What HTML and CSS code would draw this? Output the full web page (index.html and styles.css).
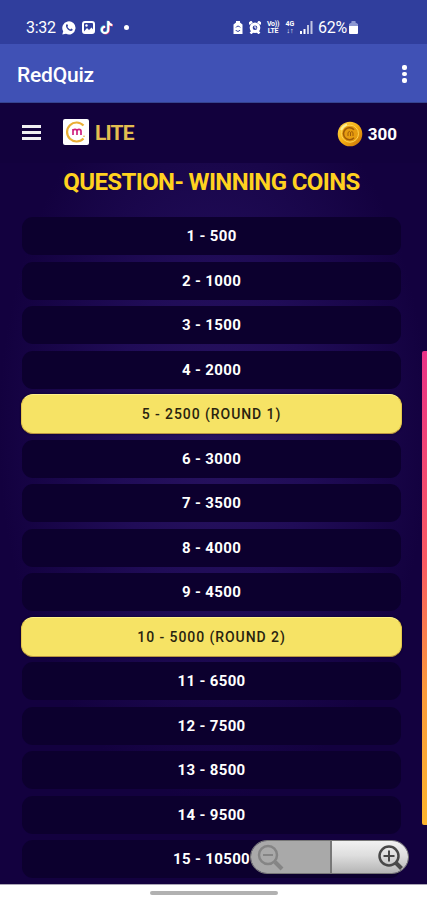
FILE: index.html
```html
<!DOCTYPE html>
<html lang="en">
<head>
<meta charset="UTF-8" />
<meta name="viewport" content="width=device-width, initial-scale=1" />
<title>RedQuiz</title>
<link rel="stylesheet" href="styles.css">
</head>
<body>

<div class="status-bar">
  <div class="status-left">
    <span class="clock">3:32</span>
    <svg class="whatsapp" width="14" height="14" viewBox="0 0 14 14"><path d="M.3 13.6 1.2 10.200A6.600 6.600 0 1 1 4 12.800z" fill="#fff"/><path d="M4.300 3.600c.8-.8 1.300-.3 1.800 1.200l-.6.900c.6 1.300 1.500 2.100 2.800 2.700l.9-.8c1.600.6 1.900 1.100 1.100 1.900C7.600 11.300 2.700 6.600 4.300 3.600z" fill="#303f9f"/></svg>
    <svg class="gallery" width="13" height="13" viewBox="0 0 13 13"><rect x="1" y="1" width="11" height="11" rx="2" fill="none" stroke="#fff" stroke-width="2"/><path d="M2 10.500 5 7l2 2 2.500-2.500 2 2.500v2.500H2z" fill="#fff"/><circle cx="4.500" cy="4.500" r="1.200" fill="#fff"/></svg>
    <svg class="tiktok" width="14" height="15" viewBox="0 0 14 15"><g fill="none" stroke-width="2"><path d="M8.900 1.500v8.700a3.300 3.300 0 1 1-3.300-3.300M8.900 2c.4 2.200 1.900 3.300 4.100 3.400" stroke="#ec4774"/><path d="M7.700.8v8.700a3.300 3.300 0 1 1-3.300-3.300" stroke="#5bdcea"/><path d="M8.300 1v8.900A3.200 3.200 0 1 1 5.100 6.700M8.300 1.500c.4 2.200 1.900 3.300 4 3.400" stroke="#fff"/></g></svg>
    <span class="more-dot"></span>
  </div>
  <div class="status-right">
    <svg class="saver" width="10" height="13" viewBox="0 0 10 13"><path d="M3 0h4v1.500l2.500 2V13h-9V3.500L3 1.500z" fill="#fff"/><path d="M3 6.500a2.300 2.300 0 0 1 4.200 0M7 9a2.300 2.300 0 0 1-4.200 0" fill="none" stroke="#303f9f"/></svg>
    <svg class="alarm" width="12" height="13" viewBox="0 0 12 13"><path d="m0 3 3-2.500M12 3 9 .5M1.500 12.500l2-2M10.500 12.500l-2-2" stroke="#fff" stroke-width="2.500"/><circle cx="6" cy="6.700" r="5.300" fill="#fff"/><circle cx="6" cy="6.700" r="2.300" fill="#303f9f"/><path d="M6 5v2h1.500" fill="none" stroke="#fff"/></svg>
    <span class="net volte">Vo))<br>LTE</span>
    <span class="net data">4G<br>↓↑</span>
    <svg class="signal" width="13" height="13" viewBox="0 0 13 13" fill="#fff"><path d="M0 10h2v3H0zM3.500 8h2v5h-2z"/><path opacity=".7" d="M7 4h2v9H7zM10.500 0h2v13h-2z"/></svg>
    <span class="percent">62%</span>
    <svg class="battery" width="9" height="13" viewBox="0 0 9 13"><path d="M2.500 0h4v1.500L9 3v3H0V3l2.500-1.500z" fill="#8d98d2"/><path d="M0 5h9v7a1 1 0 0 1-1 1H1a1 1 0 0 1-1-1z" fill="#fff"/></svg>
  </div>
</div>

<div class="app-bar">
  <h1 class="app-title">RedQuiz</h1>
  <div class="menu-dots"><span></span><span></span><span></span></div>
</div>

<main class="page">
  <header class="header">
    <div class="hamburger"><span></span><span></span><span></span></div>
    <div class="logo">
      <svg width="26" height="26" viewBox="0 0 26 26"><rect width="26" height="26" rx="2" fill="#fff"/><path d="M20.500 6.500A9.500 9.500 0 1 0 20.500 19.500" fill="none" stroke="#e9ae35" stroke-width="2.200"/><path d="M10 16v-6M10 12c0-2.300 4-2.300 4 0v4M14 12c0-2.300 4-2.300 4 0v4" fill="none" stroke="#cf217f" stroke-width="1.700"/><circle cx="21" cy="17.300" r=".8" fill="#e9ae35"/></svg>
      <span class="logo-text">LITE</span>
    </div>
    <div class="coins">
      <svg width="26" height="26" viewBox="0 0 26 26">
        <defs><linearGradient id="gold" x1="0" y1="0" x2="1" y2="1"><stop offset="0" stop-color="#ffd84a"/><stop offset=".5" stop-color="#f5ae12"/><stop offset="1" stop-color="#c46c06"/></linearGradient></defs>
        <circle cx="13" cy="13" r="12.300" fill="url(#gold)"/><circle cx="13" cy="12.700" r="8.500" fill="#e69c10" stroke="#ffd450"/><path d="M17 8.700a6 6 0 1 0 0 8" fill="none" stroke="#9e5b07" stroke-width="1.500"/><path d="M11 15v-3.500q1.500-2 2.500 0V15m0-3.500q1.500-2 2.500 0V15" fill="none" stroke="#9e5b07"/><path d="M4 9a10 10 0 0 1 6-5.500" fill="none" stroke="#fff091" stroke-width="2"/>
      </svg>
      <span>300</span>
    </div>
  </header>

  <h2 class="heading">QUESTION- WINNING COINS</h2>

  <ul class="prizes">
    <li class="prize">1 - 500</li>
    <li class="prize">2 - 1000</li>
    <li class="prize">3 - 1500</li>
    <li class="prize">4 - 2000</li>
    <li class="prize round">5 - 2500 (ROUND 1)</li>
    <li class="prize">6 - 3000</li>
    <li class="prize">7 - 3500</li>
    <li class="prize">8 - 4000</li>
    <li class="prize">9 - 4500</li>
    <li class="prize round">10 - 5000 (ROUND 2)</li>
    <li class="prize">11 - 6500</li>
    <li class="prize">12 - 7500</li>
    <li class="prize">13 - 8500</li>
    <li class="prize">14 - 9500</li>
    <li class="prize">15 - 10500</li>
  </ul>

  <div class="scrollbar"></div>

  <div class="zoom">
    <div class="zoom-out">
      <svg width="28" height="28" viewBox="0 0 28 28" fill="none" stroke="#858585"><circle cx="11" cy="11" r="9" stroke-width="2.500"/><path d="M6 11h10" stroke-width="2"/><path d="m18 18 7 7" stroke-width="4"/></svg>
    </div>
    <div class="zoom-in">
      <svg width="28" height="28" viewBox="0 0 28 28" fill="none" stroke="#484848"><circle cx="12" cy="13" r="9.500" stroke-width="2.500"/><path d="M6.500 13h11M12 7.500v11" stroke-width="2"/><path d="m19 20 5.500 5.500" stroke-width="4"/></svg>
    </div>
  </div>
</main>

<div class="nav-bar"><div class="nav-handle"></div></div>

</body>
</html>
```
FILE: styles.css
```css
* {
  box-sizing: border-box;
}
body {
  margin: 0;
  height: 900px;
  display: flex;
  flex-direction: column;
  overflow: hidden;
  font-family: Roboto, 'Open Sans', sans-serif;
  background: #fff;
  color: #fff;
}
svg {
  display: block;
  flex: none;
}

/* status bar */
.status-bar {
  height: 44px;
  padding: 11px 69px 0 26px;
  display: flex;
  justify-content: space-between;
  background: #303e9d;
}
.status-left, .status-right {
  display: flex;
  align-items: center;
  height: 33px;
}
.clock {
  width: 36px;
  font-size: 16px;
  letter-spacing: -0.3px;
}
.gallery {
  margin-left: 6px;
}
.tiktok {
  margin-left: 5px;
}
.more-dot {
  width: 5px;
  height: 5px;
  margin-left: 10px;
  border-radius: 50%;
  background: #fff;
}
.alarm {
  margin-left: 6px;
}
.net {
  font-size: 7px;
  line-height: 7px;
  font-weight: 700;
  text-align: center;
}
.volte {
  width: 14px;
  margin-left: 5px;
  letter-spacing: -0.3px;
}
.data {
  width: 10px;
  margin-left: 5px;
}
.signal {
  margin-left: 5px;
}
.percent {
  width: 30px;
  margin-left: 5px;
  font-size: 16px;
  letter-spacing: -0.3px;
}
.battery {
  margin-left: 1px;
}

/* app bar */
.app-bar {
  height: 59px;
  padding: 0 20px 0 17px;
  display: flex;
  align-items: center;
  justify-content: space-between;
  background: #4051b5;
  border-bottom: 1px solid #35438f;
}
.app-title {
  margin: 0;
  padding-top: 4px;
  font-size: 21px;
  line-height: 25px;
  font-weight: 500;
  letter-spacing: -0.2px;
}
.menu-dots {
  display: grid;
  gap: 2px;
  padding-top: 2px;
}
.menu-dots span {
  width: 5px;
  height: 4.5px;
  border-radius: 2px;
  background: #fff;
}

/* quiz page */
.page {
  position: relative;
  height: 781px;
  overflow: hidden;
  background: radial-gradient(ellipse 215px 370px at 50% 42%, #27125f 0%, #200c57 45%, #13013f 100%);
}
.header {
  height: 60px;
  padding: 0 30px 0 22px;
  display: flex;
  align-items: center;
  background: #12013d;
}
.hamburger {
  width: 19px;
  display: grid;
  gap: 3px;
  margin-top: -2px;
}
.hamburger span {
  height: 3px;
  background: #f0eff2;
}
.logo {
  display: flex;
  align-items: center;
  gap: 6px;
  margin-left: 22px;
  margin-top: -3px;
}
.logo-text {
  padding-top: 3px;
  font-size: 21px;
  font-weight: 700;
  letter-spacing: -0.8px;
  color: #e2bd50;
}
.coins {
  display: flex;
  align-items: center;
  gap: 5px;
  margin-left: auto;
  padding-top: 2px;
  font-size: 17px;
  font-weight: 700;
}
.heading {
  margin: 0;
  padding-right: 4px;
  height: 53px;
  line-height: 38px;
  font-size: 24px;
  font-weight: 700;
  letter-spacing: -0.62px;
  text-align: center;
  white-space: nowrap;
  color: #ffd21f;
}
.prizes {
  list-style: none;
  margin: 0;
  padding: 0.2px 25px 0 21px;
  display: grid;
  grid-auto-rows: 40px;
  gap: 4.5px;
}
.prize {
  display: flex;
  align-items: center;
  justify-content: center;
  border: 1px solid transparent;
  border-radius: 12px;
  background: #0c002e;
  background-clip: padding-box;
  font-size: 15px;
  font-weight: 700;
  letter-spacing: 0.35px;
}
.round {
  border-color: #fff18a #e4c64c #b99442 #e4c64c;
  background: #f6e365;
  box-shadow: 0 0 2px #060024;
  color: #29230f;
  font-size: 14px;
  font-weight: 500;
  letter-spacing: 0.93px;
}
.scrollbar {
  position: absolute;
  top: 248px;
  right: 0;
  width: 5px;
  height: 474px;
  border-radius: 2px 0 0 2px;
  background: linear-gradient(#e83287, #f85a62 45%, #fa9a3b 72%, #fcb42e);
}

/* zoom buttons float over the list */
.zoom {
  position: absolute;
  right: 18px;
  bottom: 10px;
  width: 159px;
  height: 34px;
  display: flex;
  border: 1px solid #777;
  border-radius: 17px;
  overflow: hidden;
}
.zoom-out, .zoom-in {
  flex: 1;
  display: flex;
  align-items: center;
}
.zoom-out {
  padding: 2px 0 0 6px;
  background: #a9a9a9;
  border-right: 2px solid #777;
}
.zoom-in {
  justify-content: flex-end;
  padding-right: 3px;
  background: linear-gradient(#f1f1f1, #dedede 45%, #b5b5b5);
}

/* gesture bar */
.nav-bar {
  height: 16px;
  padding-top: 6px;
  border-top: 1px solid #aaa6b5;
  background: #fff;
}
.nav-handle {
  width: 128px;
  height: 4px;
  margin-left: 150px;
  border-radius: 2px;
  background: #b1b1b1;
}
```
